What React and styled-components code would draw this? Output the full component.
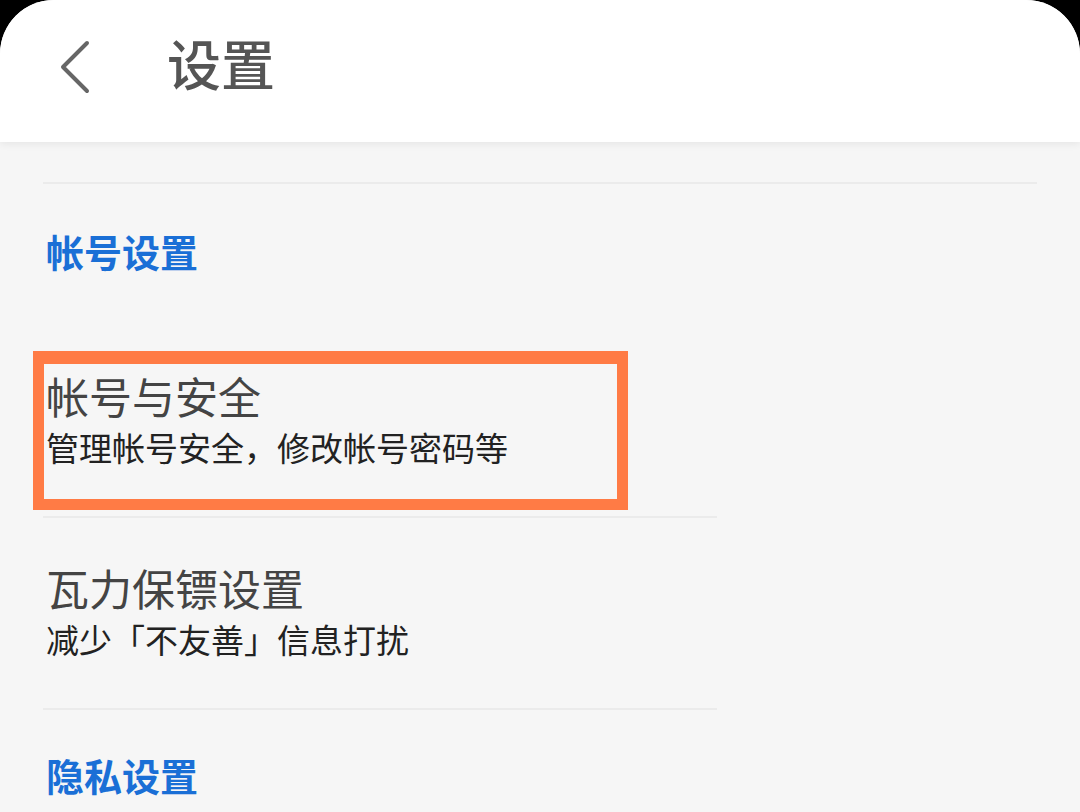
import React from 'react'
import styled, { createGlobalStyle } from 'styled-components'

const GlobalStyle = createGlobalStyle`
    html, body {
        margin: 0;
        padding: 0;
        background: #000;
    }
    * {
        box-sizing: border-box;
    }
`

const Screen = styled.div`
    width: 1080px;
    height: 812px;
    overflow: hidden;
    background: #f6f6f6;
    border-radius: 54px 54px 0 0;
    font-family: "Noto Sans CJK SC", "Noto Sans", sans-serif;
`

const Header = styled.header`
    height: 142px;
    background: #fff;
    display: flex;
    align-items: flex-start;
    padding: 36px 0 0 58px;
    box-shadow: 0 2px 8px rgba(0, 0, 0, 0.07);
    position: relative;
    z-index: 1;
`

const BackButton = styled.button`
    border: none;
    background: none;
    padding: 0;
    margin-top: 4px;
    width: 34px;
    height: 54px;
    display: flex;
`

const Title = styled.h1`
    margin: 0 0 0 75px;
    font-size: 54px;
    line-height: 1;
    font-weight: 500;
    color: #555;
`

const Content = styled.main`
    padding: 40px 43px 0;
`

const Divider = styled.div`
    height: 2px;
    background: #ebebeb;
    width: ${(props) => (props.$short ? '674px' : '994px')};
`

const SectionTitle = styled.h2`
    margin: 0;
    padding: ${(props) => props.$pad};
    font-size: 38px;
    line-height: 1;
    font-weight: 700;
    color: #1a6fd6;
`

const Item = styled.div`
    position: relative;
    padding: 48px 0 52px 3px;
`

const ItemTitle = styled.div`
    font-size: 43px;
    line-height: 1;
    font-weight: 400;
    color: #444;
    margin-bottom: 14px;
`

const ItemDesc = styled.div`
    font-size: 33px;
    line-height: 1;
    color: #222;
`

const Highlight = styled.div`
    position: absolute;
    top: 25px;
    left: -10px;
    width: 595px;
    height: 159px;
    border: 11px solid #ff7b45;
    border-top-width: 13px;
    pointer-events: none;
`

const ChevronLeft = () => (
    <svg width="34" height="54" viewBox="0 0 34 54" fill="none">
        <path d="M29 3 L5 27 L29 51" stroke="#666" strokeWidth="4" strokeLinecap="round" strokeLinejoin="round" />
    </svg>
)

export default function App() {
    return (
        <>
            <GlobalStyle />
            <Screen>
                <Header>
                    <BackButton aria-label="返回"><ChevronLeft /></BackButton>
                    <Title>设置</Title>
                </Header>
                <Content>
                    <Divider />
                    <SectionTitle $pad="48px 0 56px 3px">帐号设置</SectionTitle>
                    <Item>
                        <ItemTitle>帐号与安全</ItemTitle>
                        <ItemDesc>管理帐号安全，修改帐号密码等</ItemDesc>
                        <Highlight />
                    </Item>
                    <Divider $short />
                    <Item>
                        <ItemTitle>瓦力保镖设置</ItemTitle>
                        <ItemDesc>减少「不友善」信息打扰</ItemDesc>
                    </Item>
                    <Divider $short />
                    <SectionTitle $pad="46px 0 0 3px">隐私设置</SectionTitle>
                </Content>
            </Screen>
        </>
    )
}
